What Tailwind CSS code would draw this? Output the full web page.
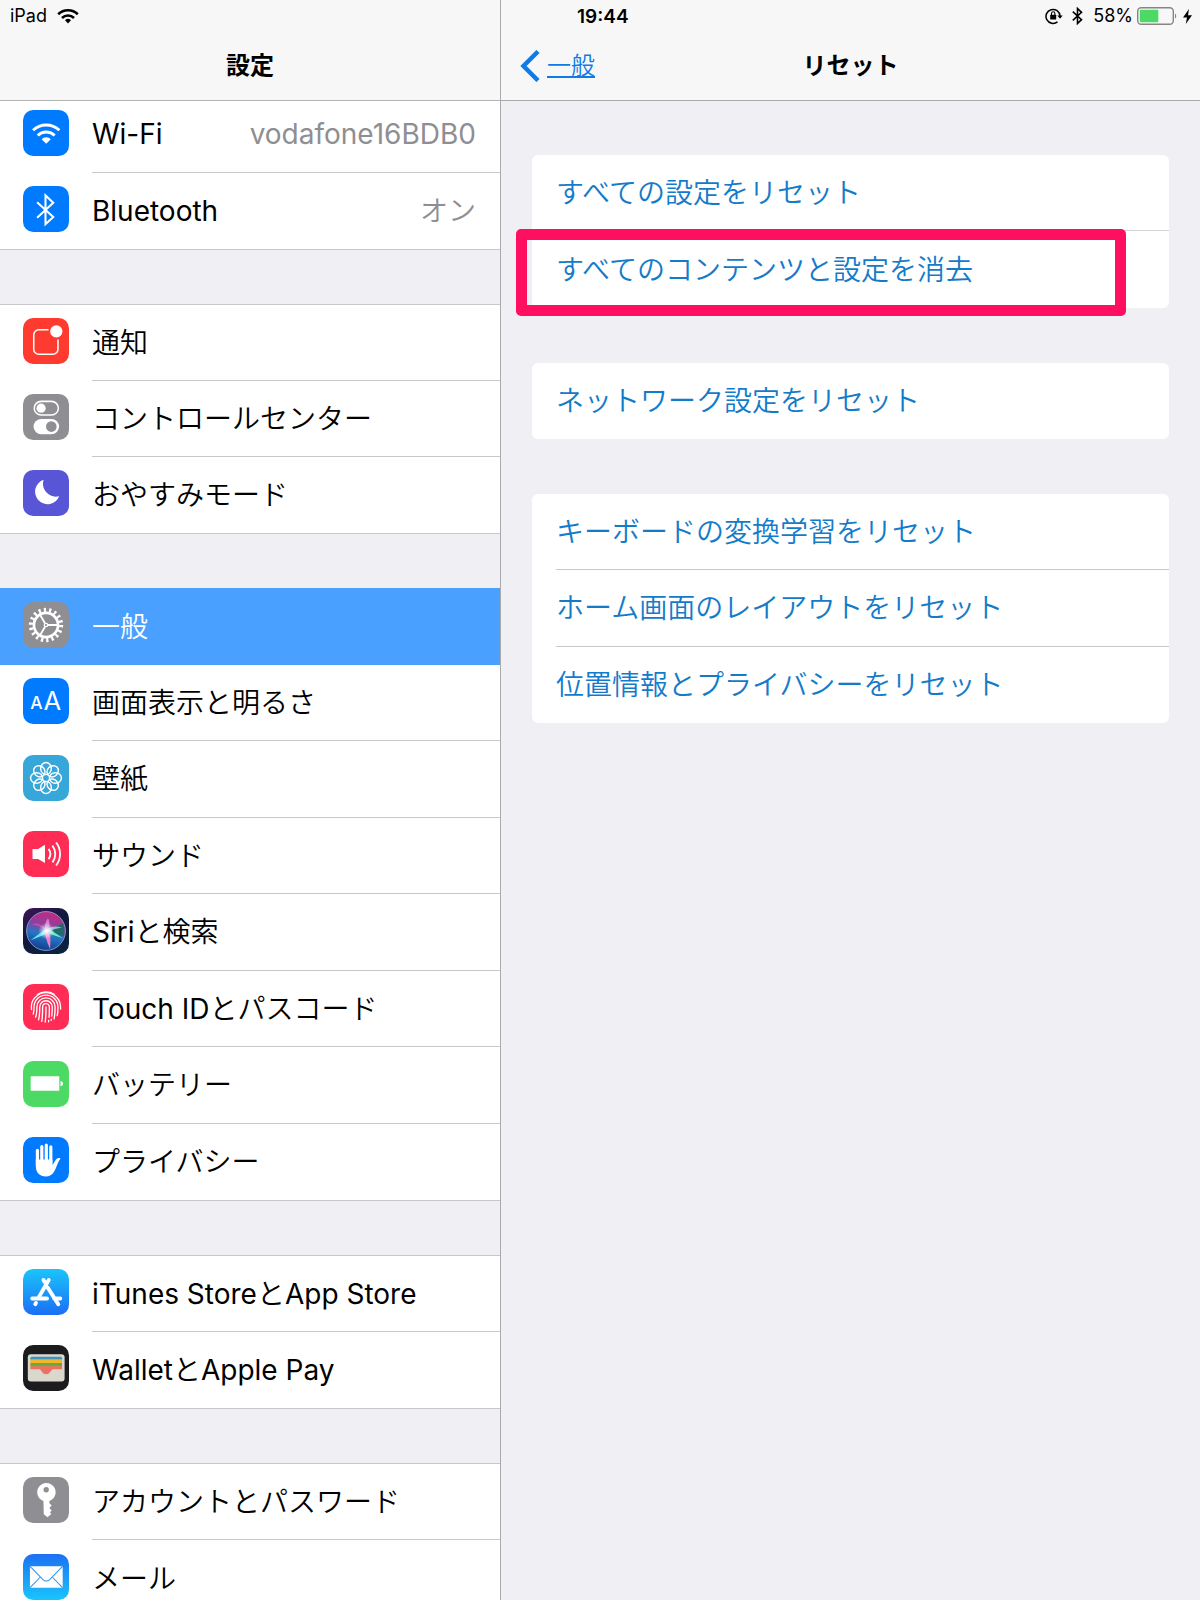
<!DOCTYPE html>
<html lang="ja">
  <head>
    <meta charset="UTF-8" />
    <meta name="viewport" content="width=device-width, initial-scale=1.0" />
    <title>設定 - リセット</title>
    <script src="https://cdn.jsdelivr.net/npm/@tailwindcss/browser@4"></script>
  </head>
  <body class="h-screen overflow-hidden flex bg-[#efeff4] font-['Inter','Noto_Sans_CJK_JP',sans-serif] text-[28px] leading-none font-[350] text-black">
    <!-- sidebar -->
    <aside class="w-5/12 h-full shrink-0 flex flex-col overflow-hidden">
      <header class="relative z-10 shrink-0 h-[101px] bg-[#f7f7f7] border-b border-[#b2b2b2]">
        <div class="h-8 flex items-center gap-[10px] pl-[10px] text-[18px] font-normal">
          <span>iPad</span>
          <svg class="w-[22px] h-4" viewBox="0 0 22 16" fill="none" stroke="#000" stroke-width="2.6">
            <path d="M1.2 6.2a14 14 0 0 1 19.6 0M5 10a8.5 8.5 0 0 1 12 0" />
            <path d="M8 12.3a4.3 4.3 0 0 1 6 0l-3 3.2z" fill="#000" stroke="none" />
          </svg>
        </div>
        <h1 class="h-[68px] flex items-center justify-center text-[24px] font-bold">設定</h1>
      </header>

      <nav class="-mt-[5px] flex flex-col gap-[54px]">
        <ul class="bg-white border-b border-[#c8c7cc]">
          <li>
            <a href="#wifi" class="h-[77px] flex items-center pl-[23px]">
              <svg class="size-[46px] mb-1 mr-[23px] shrink-0" viewBox="0 0 45 45">
                <rect width="45" height="45" rx="10" fill="#007aff" />
                <g fill="none" stroke="#fff" stroke-width="2.8">
                  <path d="M9.8 19.8a18.8 18.8 0 0 1 25.8 0M14.4 24.9a11.8 11.8 0 0 1 16.6 0" />
                </g>
                <path d="M18.2 28.6a6.2 6.2 0 0 1 9 0L22.7 33z" fill="#fff" />
              </svg>
              <span class="flex-1 self-stretch flex items-center justify-between pr-6 border-b border-[#c8c7cc] font-normal">
                <span>Wi-Fi</span><span class="text-[#8e8e93]">vodafone16BDB0</span>
              </span>
            </a>
          </li>
          <li>
            <a href="#bluetooth" class="h-[76px] flex items-center pl-[23px]">
              <svg class="size-[46px] mb-1 mr-[23px] shrink-0" viewBox="0 0 45 45">
                <rect width="45" height="45" rx="10" fill="#007aff" />
                <path d="M13.8 16 29.6 30.3 22 37.4V9.2l7.6 7.1L13.8 31" fill="none" stroke="#fff" stroke-width="2" />
              </svg>
              <span class="flex-1 flex items-center justify-between pr-6">
                <span class="font-normal">Bluetooth</span><span class="text-[#8e8e93]">オン</span>
              </span>
            </a>
          </li>
        </ul>

        <ul class="bg-white border-y border-[#c8c7cc]">
          <li>
            <a href="#notifications" class="h-[76px] flex items-center pl-[23px]">
              <svg class="size-[46px] mb-1 mr-[23px] shrink-0" viewBox="0 0 45 45">
                <rect width="45" height="45" rx="10" fill="#ff3b30" />
                <path d="M25 11.5H15.5a5 5 0 0 0-5 5v14a5 5 0 0 0 5 5h13.7a5 5 0 0 0 5-5V21" fill="none" stroke="#fff" stroke-width="1.5" />
                <circle cx="32.6" cy="13" r="6" fill="#fff" />
              </svg>
              <span class="flex-1 self-stretch flex items-center border-b border-[#c8c7cc]">通知</span>
            </a>
          </li>
          <li>
            <a href="#control-center" class="h-[76px] flex items-center pl-[23px]">
              <svg class="size-[46px] mb-1 mr-[23px] shrink-0" viewBox="0 0 45 45">
                <rect width="45" height="45" rx="10" fill="#8e8e93" />
                <rect x="11" y="7.2" width="23.6" height="13.4" rx="6.7" fill="none" stroke="#fff" stroke-width="1.5" />
                <circle cx="17.7" cy="13.9" r="4.5" fill="#fff" />
                <rect x="10.3" y="24.4" width="25" height="15" rx="7.5" fill="#fff" />
                <circle cx="27.7" cy="31.9" r="5.2" fill="#8e8e93" />
              </svg>
              <span class="flex-1 self-stretch flex items-center border-b border-[#c8c7cc]">コントロールセンター</span>
            </a>
          </li>
          <li>
            <a href="#do-not-disturb" class="h-[76px] flex items-center pl-[23px]">
              <svg class="size-[46px] mb-1 mr-[23px] shrink-0" viewBox="0 0 45 45">
                <rect width="45" height="45" rx="10" fill="#5856d6" />
                <path d="M20.2 9.6A12.2 12.2 0 1 0 35.4 25.6 12.6 12.6 0 0 1 20.2 9.6z" fill="#fff" />
              </svg>
              <span class="flex-1">おやすみモード</span>
            </a>
          </li>
        </ul>

        <ul class="bg-white border-b border-[#c8c7cc]">
          <li>
            <a href="#general" aria-current="page" class="h-[77px] flex items-center pl-[23px] bg-[#4aa0ff] text-white">
              <svg class="size-[46px] mb-1 mr-[23px] shrink-0" viewBox="0 0 45 45">
                <rect width="45" height="45" rx="10" fill="#8e8e93" />
                <g fill="none" stroke="#fff">
                  <circle cx="22.5" cy="22.5" r="11.8" stroke-width="2.6" />
                  <circle cx="22.5" cy="22.5" r="14.8" stroke-width="4" stroke-dasharray="2.2 2.966" />
                  <path d="M24.5 22.5H34M21.5 20.8 16.3 11.8M21.5 24.2l-5.2 9" stroke-width="1.8" />
                  <circle cx="22.5" cy="22.5" r="1.7" stroke-width="1.2" />
                </g>
              </svg>
              <span class="flex-1">一般</span>
            </a>
          </li>
          <li>
            <a href="#display" class="h-[76px] flex items-center pl-[23px]">
              <svg class="size-[46px] mb-1 mr-[23px] shrink-0" viewBox="0 0 45 45" fill="#fff" font-family="Inter, sans-serif">
                <rect width="45" height="45" rx="10" fill="#007aff" />
                <text x="7" y="30" font-size="17" font-weight="500">A</text>
                <text x="20" y="31" font-size="25" font-weight="400">A</text>
              </svg>
              <span class="flex-1 self-stretch flex items-center border-b border-[#c8c7cc]">画面表示と明るさ</span>
            </a>
          </li>
          <li>
            <a href="#wallpaper" class="h-[77px] flex items-center pl-[23px]">
              <svg class="size-[46px] mb-1 mr-[23px] shrink-0" viewBox="0 0 45 45">
                <rect width="45" height="45" rx="10" fill="#37a6d9" />
                <g fill="none" stroke="#fff" stroke-width="1.4">
                  <ellipse cx="22.5" cy="13.3" rx="5.2" ry="5.9" />
                  <ellipse cx="22.5" cy="13.3" rx="5.2" ry="5.9" transform="rotate(45 22.5 22.5)" />
                  <ellipse cx="22.5" cy="13.3" rx="5.2" ry="5.9" transform="rotate(90 22.5 22.5)" />
                  <ellipse cx="22.5" cy="13.3" rx="5.2" ry="5.9" transform="rotate(135 22.5 22.5)" />
                  <ellipse cx="22.5" cy="13.3" rx="5.2" ry="5.9" transform="rotate(180 22.5 22.5)" />
                  <ellipse cx="22.5" cy="13.3" rx="5.2" ry="5.9" transform="rotate(225 22.5 22.5)" />
                  <ellipse cx="22.5" cy="13.3" rx="5.2" ry="5.9" transform="rotate(270 22.5 22.5)" />
                  <ellipse cx="22.5" cy="13.3" rx="5.2" ry="5.9" transform="rotate(315 22.5 22.5)" />
                </g>
              </svg>
              <span class="flex-1 self-stretch flex items-center border-b border-[#c8c7cc]">壁紙</span>
            </a>
          </li>
          <li>
            <a href="#sounds" class="h-[76px] flex items-center pl-[23px]">
              <svg class="size-[46px] mb-1 mr-[23px] shrink-0" viewBox="0 0 45 45">
                <rect width="45" height="45" rx="10" fill="#ff2d55" />
                <path d="M9.3 17.5h5.5l6.7-4v17.8l-6.7-4H9.3z" fill="#fff" />
                <path d="M25 17.5a8.5 8.5 0 0 1 0 10M28.8 14.3a13.5 13.5 0 0 1 0 16.4M32.4 11.2a18.5 18.5 0 0 1 0 22.6" fill="none" stroke="#fff" stroke-width="1.8" />
              </svg>
              <span class="flex-1 self-stretch flex items-center border-b border-[#c8c7cc]">サウンド</span>
            </a>
          </li>
          <li>
            <a href="#siri" class="h-[77px] flex items-center pl-[23px]">
              <svg class="size-[46px] mb-1 mr-[23px] shrink-0" viewBox="0 0 45 45">
                <defs>
                  <linearGradient id="siriBg" x1="0" y1="0" x2="0.6" y2="1">
                    <stop offset="0" stop-color="#40145a" />
                    <stop offset="0.5" stop-color="#12183c" />
                    <stop offset="1" stop-color="#0a2140" />
                  </linearGradient>
                  <linearGradient id="siriOrb" x1="0.6" y1="0" x2="0.35" y2="1">
                    <stop offset="0" stop-color="#c8287e" />
                    <stop offset="0.35" stop-color="#8d3fa0" />
                    <stop offset="0.6" stop-color="#2476c4" />
                    <stop offset="1" stop-color="#123a8c" />
                  </linearGradient>
                  <radialGradient id="siriGlow">
                    <stop offset="0" stop-color="#fff" />
                    <stop offset="0.3" stop-color="#fff" stop-opacity="0.7" />
                    <stop offset="1" stop-color="#fff" stop-opacity="0" />
                  </radialGradient>
                </defs>
                <rect width="45" height="45" rx="10" fill="url(#siriBg)" />
                <circle cx="22.5" cy="22.5" r="19" fill="url(#siriOrb)" stroke="#8f9bc4" stroke-width="0.9" />
                <path d="M24 22 39 15q2.500 6 1 13z" fill="#14705f" opacity="0.85" />
                <path d="M22 20q-7-7-14-4 8 1 14 6z" fill="#e05ba8" opacity="0.6" />
                <path d="M22 20.500 7.500 31.500 24 25z" fill="#5fe6f0" />
                <path d="M22 24 39 29.500 25 20z" fill="#62f0c4" />
                <path d="M21 23q2 10 5.500 17 1-9-.5-17z" fill="#f27cc8" />
                <path d="M21.500 22q-1-7 3-12 2.500 5 1 12z" fill="#e9a0e4" opacity="0.7" />
                <path d="M22 22q7-6 16-3-8 1-15 5z" fill="#c9d6ff" opacity="0.7" />
                <circle cx="23" cy="22.5" r="8" fill="url(#siriGlow)" />
              </svg>
              <span class="flex-1 self-stretch flex items-center border-b border-[#c8c7cc]"><span class="font-normal">Siri</span>と検索</span>
            </a>
          </li>
          <li>
            <a href="#touch-id" class="h-[76px] flex items-center pl-[23px]">
              <svg class="size-[46px] mb-1 mr-[23px] shrink-0" viewBox="0 0 45 45">
                <rect width="45" height="45" rx="10" fill="#ff2d55" />
                <g fill="none" stroke="#fff" stroke-width="1.3" stroke-linecap="round">
                  <path d="M14 10.300a15 15 0 0 1 16.500-.3" />
                  <path d="M8.300 25c-.5-5 1-9.500 4-12.200a14 14 0 0 1 20-.3c3 2.500 4.700 7 4.500 12" />
                  <path d="M10 29.500c.8-2.500.8-4 .8-7a11.700 11.700 0 0 1 23.400 0c0 3.500 0 6-.8 8.500" />
                  <path d="M12.300 32.500c1.200-3 1.300-6 1.300-10a8.900 8.900 0 0 1 17.800 0c0 4.500-.2 8-1 11.500" />
                  <path d="M15.200 35c1.200-4 1.200-8 1.200-12.500a6.100 6.100 0 0 1 12.200 0c0 4-.1 6.500-.5 9M27.700 34.500l-.2 1" />
                  <path d="M18.300 36.500c.9-4.500.9-9 .9-14a3.300 3.300 0 0 1 6.600 0c0 4 0 7-.3 10M25.100 35.500l-.1 1.500" />
                  <path d="M21.700 37.200c.8-5 .8-10 .8-14.700" />
                </g>
              </svg>
              <span class="flex-1 self-stretch flex items-center border-b border-[#c8c7cc]"><span class="font-normal">Touch ID</span>とパスコード</span>
            </a>
          </li>
          <li>
            <a href="#battery" class="h-[77px] flex items-center pl-[23px]">
              <svg class="size-[46px] mb-1 mr-[23px] shrink-0" viewBox="0 0 45 45" fill="#fff">
                <rect width="45" height="45" rx="10" fill="#4cd964" />
                <rect x="7.5" y="15" width="28" height="14" rx="0.5" />
                <path d="M36.700 19.500c3.300.8 3.300 4.400 0 5.200z" />
              </svg>
              <span class="flex-1 self-stretch flex items-center border-b border-[#c8c7cc]">バッテリー</span>
            </a>
          </li>
          <li>
            <a href="#privacy" class="h-[76px] flex items-center pl-[23px]">
              <svg class="size-[46px] mb-1 mr-[23px] shrink-0" viewBox="0 0 45 45">
                <rect width="45" height="45" rx="10" fill="#007aff" />
                <path d="M14.1 13v15M18.4 9.3V25M22.8 7.8V25M27.2 9.5V26" stroke="#fff" stroke-width="3.1" stroke-linecap="round" />
                <path d="M12.550 22h16.200v5.500c1.800-1.800 2.600-5.500 5.300-6.700 1.400-.6 2.800 0 2.500.7-2.500 2.500-3.700 8.500-6.200 12.500-2 3.300-4.500 4.600-8 4.600-6 0-9.800-4-9.800-10z" fill="#fff" />
              </svg>
              <span class="flex-1">プライバシー</span>
            </a>
          </li>
        </ul>

        <ul class="bg-white border-y border-[#c8c7cc] font-normal">
          <li>
            <a href="#stores" class="h-[76px] flex items-center pl-[23px]">
              <svg class="size-[46px] mb-1 mr-[23px] shrink-0" viewBox="0 0 45 45">
                <defs>
                  <linearGradient id="store" x1="0" y1="0" x2="0" y2="1">
                    <stop offset="0" stop-color="#1bc4fb" />
                    <stop offset="1" stop-color="#1b6ff5" />
                  </linearGradient>
                </defs>
                <rect width="45" height="45" rx="10" fill="url(#store)" />
                <g fill="none" stroke="#fff" stroke-width="3.8" stroke-linecap="round">
                  <path d="M25.200 10.700 15.500 27.500M12.700 33.200l-.7 1.200M20 10.700l1.200 2M24.300 18.300l10.200 16.200M9 28.800h14.500M30.500 28.800H36.500" />
                </g>
              </svg>
              <span class="flex-1 self-stretch flex items-center border-b border-[#c8c7cc]">iTunes Store<span class="font-[350]">と</span>App Store</span>
            </a>
          </li>
          <li>
            <a href="#wallet" class="h-[76px] flex items-center pl-[23px]">
              <svg class="size-[46px] mb-1 mr-[23px] shrink-0" viewBox="0 0 45 45">
                <rect width="45" height="45" rx="10" fill="#1c1c1e" />
                <rect x="4.7" y="9" width="36" height="26.7" rx="3" fill="#dad7cd" />
                <path d="M7.200 14.500V13a1.500 1.500 0 0 1 1.500-1.500h28A1.500 1.500 0 0 1 38.200 13v1.500z" fill="#3d93bf" />
                <path d="M7.200 14.300h31v3.500h-31z" fill="#efb72e" />
                <path d="M7.200 17.500h31v3.700h-31z" fill="#6fa83c" />
                <path d="M7.200 20.900h31v2.800h-8.700c-2.300 0-2.300 4.800-6.800 4.800s-4.500-4.800-6.800-4.800H7.200z" fill="#f0705f" />
              </svg>
              <span class="flex-1">Wallet<span class="font-[350]">と</span>Apple Pay</span>
            </a>
          </li>
        </ul>

        <ul class="bg-white border-t border-[#c8c7cc]">
          <li>
            <a href="#accounts" class="h-[76px] flex items-center pl-[23px]">
              <svg class="size-[46px] mb-1 mr-[23px] shrink-0" viewBox="0 0 45 45">
                <rect width="45" height="45" rx="10" fill="#8e8e93" />
                <path d="M20 23.400a9 9 0 1 1 5.800 0v2.300l2.300 2.300-2.300 2.300 2.300 2.400-1.700 1.900 1.300 1.500-3.700 3.200-3.700-2.800z" fill="#fff" />
                <circle cx="22.7" cy="12.5" r="2.6" fill="#8e8e93" />
              </svg>
              <span class="flex-1 self-stretch flex items-center border-b border-[#c8c7cc]">アカウントとパスワード</span>
            </a>
          </li>
          <li>
            <a href="#mail" class="h-[77px] flex items-center pl-[23px]">
              <svg class="size-[46px] mb-1 mr-[23px] shrink-0" viewBox="0 0 45 45">
                <defs>
                  <linearGradient id="mail" x1="0" y1="0" x2="0" y2="1">
                    <stop offset="0" stop-color="#1d70f2" />
                    <stop offset="1" stop-color="#1ac5fb" />
                  </linearGradient>
                </defs>
                <rect width="45" height="45" rx="10" fill="url(#mail)" />
                <rect x="6.8" y="12" width="32" height="21" rx="1.2" fill="#fff" />
                <path d="M7.200 12.400 19.500 25q3.300 3 6.600 0L38.400 12.400M7.200 32.700 17 22.500M38.400 32.700 28.600 22.500" fill="none" stroke="#2b93f5" stroke-width="1" />
              </svg>
              <span class="flex-1">メール</span>
            </a>
          </li>
        </ul>
      </nav>
    </aside>

    <!-- detail pane -->
    <main class="flex-1 min-w-0 border-l border-[#a9a9ae]">
      <header class="h-[101px] bg-[#f7f7f7] border-b border-[#a9a9ae]">
        <div class="h-8 flex items-center justify-between pl-[76px] pr-2 text-[18px] font-normal">
          <time class="text-[19px] font-semibold">19:44</time>
          <div class="flex items-center">
            <svg class="w-[18px] h-[18px] mr-[9px]" viewBox="0 0 18 18" fill="none" stroke="#000" stroke-width="1.5">
              <path d="M12.500 14.800A7 7 0 1 1 15 9" />
              <path d="M12.300 8.500h5.400L15 11.800z" fill="#000" stroke="none" />
              <rect x="5.2" y="7.8" width="6" height="4.8" rx="0.5" fill="#000" stroke="none" />
              <path d="M6.500 8V6.500a1.700 1.700 0 0 1 3.400 0V8" stroke-width="1.1" />
            </svg>
            <svg class="w-[11px] h-[18px] mr-[10px]" viewBox="0 0 11 18" fill="none" stroke="#000" stroke-width="1.6">
              <path d="M.8 4.700 9.500 12.700 5.500 16.500v-15l4 3.800L.8 13.300" />
            </svg>
            <span class="mr-1">58%</span>
            <svg class="w-[42px] h-[18px] mr-1" viewBox="0 0 42 18">
              <rect x="0.7" y="0.7" width="35.6" height="16.6" rx="3.5" fill="none" stroke="#858585" stroke-width="1.4" />
              <rect x="2.8" y="2.8" width="18.5" height="12.4" rx="1" fill="#4cd964" />
              <path d="M38 6.200q2.500 2.800 0 5.600z" fill="#858585" />
            </svg>
            <svg class="w-[9px] h-[15px]" viewBox="0 0 9 15"><path d="M6 0 0 8.500h4L2.800 15 9 6.200H5z" /></svg>
          </div>
        </div>
        <div class="h-[68px] grid grid-cols-3 items-center text-[24px]">
          <a href="#general" class="flex items-center gap-[7px] pl-[19px] text-[#0f7be5]">
            <svg class="w-5 h-8" viewBox="0 0 20 32" fill="none" stroke="#0f7be5" stroke-width="4.5"><path d="M18 1.500 3.500 16 18 30.500" /></svg>
            <span class="underline underline-offset-2 decoration-2">一般</span>
          </a>
          <h2 class="text-center font-bold">リセット</h2>
        </div>
      </header>

      <div class="flex flex-col gap-[55px] px-[31px] pt-[54px] text-[#147bc9]">
        <section class="bg-white rounded-md pl-6">
          <button type="button" class="block w-full h-[76px] border-b border-[#d5d5d9] text-left">すべての設定をリセット</button>
          <div class="relative">
            <button type="button" class="block w-full h-[77px] text-left">すべてのコンテンツと設定を消去</button>
            <div class="absolute -top-[2px] -bottom-2 -left-10 right-[43px] border-[11px] border-[#ff0f5f] rounded-[5px] pointer-events-none"></div>
          </div>
        </section>
        <section class="bg-white rounded-md pl-6">
          <button type="button" class="block w-full h-[76px] text-left">ネットワーク設定をリセット</button>
        </section>
        <section class="bg-white rounded-md pl-6">
          <button type="button" class="block w-full h-[76px] border-b border-[#c8c7cc] text-left">キーボードの変換学習をリセット</button>
          <button type="button" class="block w-full h-[77px] border-b border-[#c8c7cc] text-left">ホーム画面のレイアウトをリセット</button>
          <button type="button" class="block w-full h-[76px] text-left">位置情報とプライバシーをリセット</button>
        </section>
      </div>
    </main>
  </body>
</html>
